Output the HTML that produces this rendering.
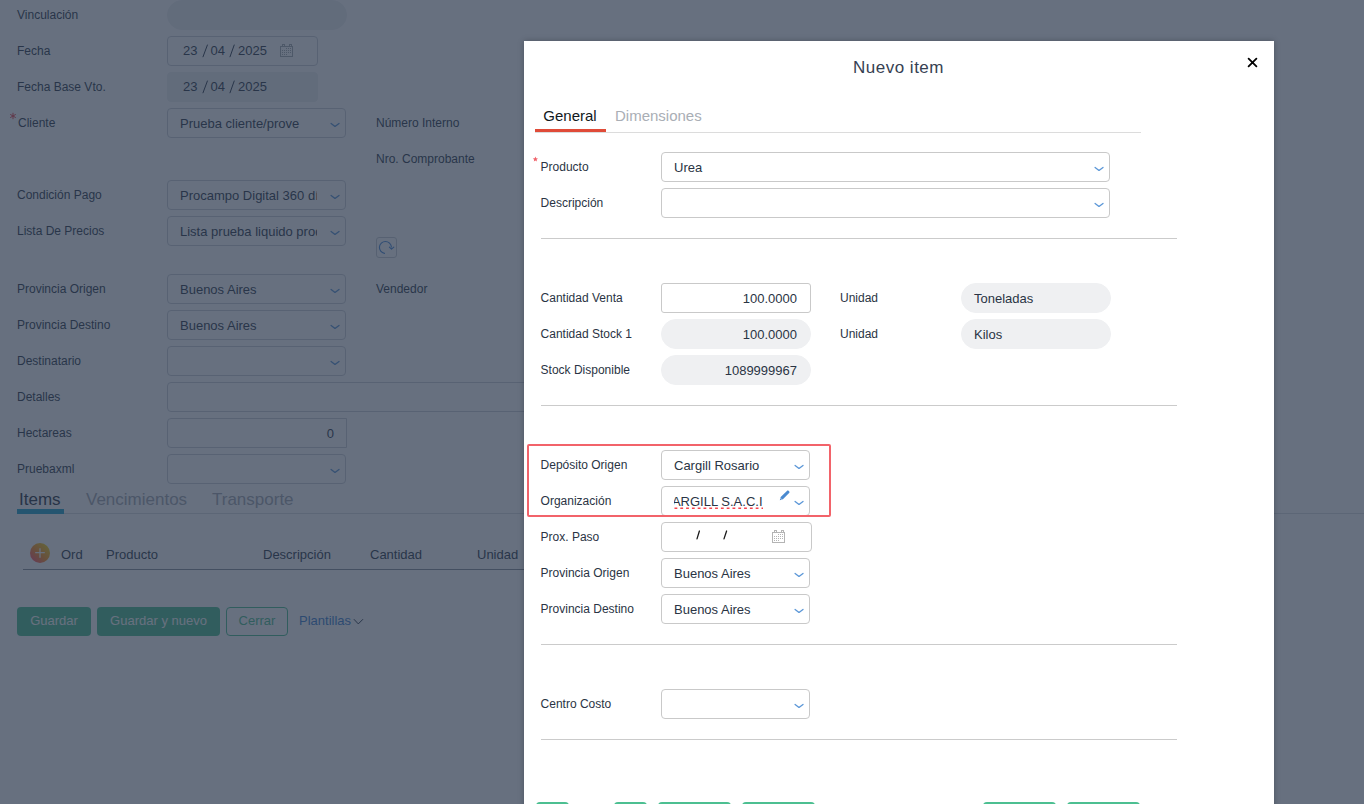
<!DOCTYPE html>
<html><head><meta charset="utf-8"><style>
*{box-sizing:border-box;margin:0;padding:0}
html,body{width:1364px;height:804px;overflow:hidden;background:#fff;font-family:"Liberation Sans",sans-serif;color:#2f3b4c}
.a{position:absolute}
svg.a{overflow:visible}
.lb{position:absolute;font-size:12px;line-height:12px;white-space:nowrap;color:#2f3b4c}
.val{position:absolute;font-size:13px;line-height:13px;white-space:nowrap;color:#2f3b4c}
.in{position:absolute;height:30px;border:1px solid #cdd1d6;border-radius:4px;background:#fff;font-size:13px;line-height:30px;padding-left:12px;white-space:nowrap;overflow:hidden;color:#2f3b4c}
.clip{display:inline-block;overflow:hidden;vertical-align:top}
.dis{background:#eef0f2;border-color:#eef0f2}
.pill{border-radius:15px}
.star{position:absolute;color:#e8434d;font-size:14px;line-height:14px}
.tab{position:absolute;top:490.7px;font-size:17px;line-height:17px;white-space:nowrap}
.th{position:absolute;top:548px;font-size:13px;line-height:13px;white-space:nowrap;color:#2f3b4c}
#ov{position:absolute;left:0;top:0;width:1364px;height:804px;background:rgba(39,51,72,0.7)}
#modal{position:absolute;left:524px;top:41px;width:750px;height:800px;background:#fff;box-shadow:0 0 6px rgba(0,0,0,0.25)}
#modal .lb,#modal .in{color:#2a3444}
#modal .in{border-color:#c9c9c9}
#modal .dis{border-color:#eff0f2;background:#eff0f2}
.sep{position:absolute;height:1px;background:#cbcbcb}
.btn{position:absolute;height:29px;border-radius:4px;background:#4cbf91;color:#fff;font-size:13px;line-height:27px;text-align:center;white-space:nowrap}
</style></head><body>
<div id="bg">
<div class="lb" style="left:17px;top:9px">Vinculación</div>
<div class="in dis pill" style="left:167px;top:0px;width:180px"></div>
<div class="lb" style="left:17px;top:45px">Fecha</div>
<div class="in" style="left:167px;top:36px;width:151px"></div>
<div class="lb" style="left:17px;top:81px">Fecha Base Vto.</div>
<div class="in dis" style="left:167px;top:72px;width:151px"></div>
<div class="val" style="left:183px;top:44px">23</div>
<div class="val" style="left:210.5px;top:44px">04</div>
<div class="val" style="left:238px;top:44px">2025</div>
<svg class="a" style="left:200.9px;top:42.6px" width="8.400000000000006" height="15.799999999999997"><line x1="6.400000000000006" y1="2.0" x2="2.0" y2="13.799999999999997" stroke="#2f3b4c" stroke-width="1.0" stroke-linecap="round"/></svg>
<svg class="a" style="left:228.2px;top:42.6px" width="8.200000000000017" height="15.799999999999997"><line x1="6.200000000000017" y1="2.0" x2="2.0" y2="13.799999999999997" stroke="#2f3b4c" stroke-width="1.0" stroke-linecap="round"/></svg>
<div class="val" style="left:183px;top:80px">23</div>
<div class="val" style="left:210.5px;top:80px">04</div>
<div class="val" style="left:238px;top:80px">2025</div>
<svg class="a" style="left:200.9px;top:78.6px" width="8.400000000000006" height="15.800000000000011"><line x1="6.400000000000006" y1="2.0" x2="2.0" y2="13.800000000000011" stroke="#2f3b4c" stroke-width="1.0" stroke-linecap="round"/></svg>
<svg class="a" style="left:228.2px;top:78.6px" width="8.200000000000017" height="15.800000000000011"><line x1="6.200000000000017" y1="2.0" x2="2.0" y2="13.800000000000011" stroke="#2f3b4c" stroke-width="1.0" stroke-linecap="round"/></svg>
<svg class="a" style="left:278px;top:42px" width="18" height="18" viewBox="0 0 18 18"><g fill="none" stroke="#a9adb3" stroke-width="1"><rect x="2.5" y="4.5" width="12" height="10"/><rect x="4.5" y="2.5" width="2" height="2"/><rect x="11.5" y="2.5" width="2" height="2"/></g><g fill="#a9adb3"><rect x="8" y="6" width="1" height="1"/><rect x="10" y="6" width="1" height="1"/><rect x="12" y="6" width="1" height="1"/><rect x="4" y="8" width="1" height="1"/><rect x="6" y="8" width="1" height="1"/><rect x="8" y="8" width="1" height="1"/><rect x="10" y="8" width="1" height="1"/><rect x="12" y="8" width="1" height="1"/><rect x="4" y="10" width="1" height="1"/><rect x="6" y="10" width="1" height="1"/><rect x="8" y="10" width="1" height="1"/><rect x="10" y="10" width="1" height="1"/><rect x="12" y="10" width="1" height="1"/><rect x="4" y="12" width="1" height="1"/><rect x="6" y="12" width="1" height="1"/><rect x="8" y="12" width="1" height="1"/></g></svg>
<svg class="a" style="left:0;top:0" width="1" height="1"><path d="M13.00 113.20L13.00 118.80M15.42 114.60L10.58 117.40M15.42 117.40L10.58 114.60" stroke="#e8434d" stroke-width="1.0" stroke-linecap="round"/></svg>
<div class="lb" style="left:18px;top:117px">Cliente</div>
<div class="in " style="left:167px;top:108px;width:179px">Prueba cliente/prove</div>
<svg class="a" style="left:328.6px;top:121px" width="12" height="8" viewBox="0 0 12 8"><path d="M2.1 2.4L6 5.4L10 2.4" fill="none" stroke="#5a96d7" stroke-width="1.3" stroke-linecap="round" stroke-linejoin="round"/></svg>
<div class="lb" style="left:376px;top:117px">Número Interno</div>
<div class="lb" style="left:376px;top:153px">Nro. Comprobante</div>
<div class="lb" style="left:17px;top:189px">Condición Pago</div>
<div class="in " style="left:167px;top:180px;width:179px"><span class="clip" style="width:137px">Procampo Digital 360 días</span></div>
<svg class="a" style="left:328.6px;top:193px" width="12" height="8" viewBox="0 0 12 8"><path d="M2.1 2.4L6 5.4L10 2.4" fill="none" stroke="#5a96d7" stroke-width="1.3" stroke-linecap="round" stroke-linejoin="round"/></svg>
<div class="lb" style="left:17px;top:225px">Lista De Precios</div>
<div class="in " style="left:167px;top:216px;width:179px"><span class="clip" style="width:137px">Lista prueba liquido producto</span></div>
<svg class="a" style="left:328.6px;top:229px" width="12" height="8" viewBox="0 0 12 8"><path d="M2.1 2.4L6 5.4L10 2.4" fill="none" stroke="#5a96d7" stroke-width="1.3" stroke-linecap="round" stroke-linejoin="round"/></svg>
<div class="a" style="left:376px;top:237px;width:21px;height:21px;border:1px solid #c9cdd2;border-radius:3px"></div>
<svg class="a" style="left:376px;top:237px" width="21" height="21" viewBox="0 0 21 21"><path d="M8.5 16.4A6 6 0 1 1 15.4 10" fill="none" stroke="#4a8ad8" stroke-width="1.15" stroke-linecap="round"/><path d="M13.4 10.1L15.5 12.2L17.8 10.1" fill="none" stroke="#4a8ad8" stroke-width="1.15" stroke-linecap="round" stroke-linejoin="round"/></svg>
<div class="lb" style="left:17px;top:283px">Provincia Origen</div>
<div class="in " style="left:167px;top:274px;width:179px">Buenos Aires</div>
<svg class="a" style="left:328.6px;top:287px" width="12" height="8" viewBox="0 0 12 8"><path d="M2.1 2.4L6 5.4L10 2.4" fill="none" stroke="#5a96d7" stroke-width="1.3" stroke-linecap="round" stroke-linejoin="round"/></svg>
<div class="lb" style="left:376px;top:283px">Vendedor</div>
<div class="lb" style="left:17px;top:319px">Provincia Destino</div>
<div class="in " style="left:167px;top:310px;width:179px">Buenos Aires</div>
<svg class="a" style="left:328.6px;top:323px" width="12" height="8" viewBox="0 0 12 8"><path d="M2.1 2.4L6 5.4L10 2.4" fill="none" stroke="#5a96d7" stroke-width="1.3" stroke-linecap="round" stroke-linejoin="round"/></svg>
<div class="lb" style="left:17px;top:355px">Destinatario</div>
<div class="in " style="left:167px;top:346px;width:179px"></div>
<svg class="a" style="left:328.6px;top:359px" width="12" height="8" viewBox="0 0 12 8"><path d="M2.1 2.4L6 5.4L10 2.4" fill="none" stroke="#5a96d7" stroke-width="1.3" stroke-linecap="round" stroke-linejoin="round"/></svg>
<div class="lb" style="left:17px;top:391px">Detalles</div>
<div class="in " style="left:167px;top:382px;width:900px"></div>
<div class="lb" style="left:17px;top:427px">Hectareas</div>
<div class="in " style="left:167px;top:418px;width:180px;text-align:right;padding-right:13px;padding-right:12px;border-radius:4px 0 0 4px">0</div>
<div class="lb" style="left:17px;top:463px">Pruebaxml</div>
<div class="in " style="left:167px;top:454px;width:179px"></div>
<svg class="a" style="left:328.6px;top:467px" width="12" height="8" viewBox="0 0 12 8"><path d="M2.1 2.4L6 5.4L10 2.4" fill="none" stroke="#5a96d7" stroke-width="1.3" stroke-linecap="round" stroke-linejoin="round"/></svg>
<div class="tab" style="left:19px;color:#2a3444">Items</div>
<div class="tab" style="left:86px;color:#a3a9b1">Vencimientos</div>
<div class="tab" style="left:212px;color:#a3a9b1">Transporte</div>
<div class="a" style="left:17px;top:513px;width:1347px;height:1px;background:#d9dce0"></div>
<div class="a" style="left:17px;top:509px;width:47px;height:5px;background:#22a6cc"></div>
<div class="a" style="left:30px;top:543px;width:20px;height:20px;border-radius:10px;background:linear-gradient(45deg,#ff3f80 0%,#ff9320 48%,#f2e41a 100%)"></div>
<svg class="a" style="left:30px;top:543px" width="20" height="20"><path d="M10 5.2V14.8M5.2 9.6H14.8" stroke="#fff" stroke-width="1.3"/></svg>
<div class="th" style="left:61px">Ord</div>
<div class="th" style="left:106px">Producto</div>
<div class="th" style="left:263px">Descripción</div>
<div class="th" style="left:370px">Cantidad</div>
<div class="th" style="left:477px">Unidad</div>
<div class="a" style="left:23px;top:569px;width:1000px;height:1px;background:#8a919c"></div>
<div class="btn" style="left:17px;top:607px;width:74px">Guardar</div>
<div class="btn" style="left:97px;top:607px;width:123px">Guardar y nuevo</div>
<div class="btn" style="left:226px;top:607px;width:62px;background:#fff;border:1px solid #4cbf91;color:#4cbf91;line-height:25px">Cerrar</div>
<div class="a" style="left:299px;top:614px;font-size:13px;line-height:13px;color:#3c7fd0">Plantillas</div>
<svg class="a" style="left:352px;top:617px" width="13" height="9"><path d="M1.9 2.2L6.3 6.9L11 2.2" fill="none" stroke="#2f3b4c" stroke-width="1"/></svg>
</div>
<div id="ov"></div>
<div id="modal">
<div class="a" style="left:329px;top:18px;font-size:17px;line-height:17px;letter-spacing:0.5px;color:#364152">Nuevo item</div>
<svg class="a" style="left:723px;top:16px" width="11" height="11" viewBox="0 0 11 11"><path d="M1.6 1.6L9.4 9.4M9.4 1.6L1.6 9.4" stroke="#000" stroke-width="1.8" stroke-linecap="round"/></svg>
<div class="a" style="left:19.3px;top:67px;font-size:15px;line-height:15px;color:#111820">General</div>
<div class="a" style="left:91px;top:67px;font-size:15px;line-height:15px;color:#a9aeb5">Dimensiones</div>
<div class="a" style="left:11px;top:91px;width:606px;height:1px;background:#dcdcdc"></div>
<div class="a" style="left:11px;top:88px;width:71px;height:3px;background:#e04b38"></div>
<svg class="a" style="left:0;top:0" width="1" height="1"><polygon points="11.40,115.60 12.11,117.32 13.97,117.47 12.56,118.68 12.99,120.48 11.40,119.52 9.81,120.48 10.24,118.68 8.83,117.47 10.69,117.32" fill="#f0626a"/></svg>
<div class="lb" style="left:16.600000000000023px;top:120px">Producto</div>
<div class="in " style="left:137px;top:111px;width:449px">Urea</div>
<svg class="a" style="left:568.6px;top:124px" width="12" height="8" viewBox="0 0 12 8"><path d="M2.1 2.4L6 5.4L10 2.4" fill="none" stroke="#5a96d7" stroke-width="1.3" stroke-linecap="round" stroke-linejoin="round"/></svg>
<div class="lb" style="left:16.600000000000023px;top:156px">Descripción</div>
<div class="in " style="left:137px;top:147px;width:449px"></div>
<svg class="a" style="left:568.6px;top:160px" width="12" height="8" viewBox="0 0 12 8"><path d="M2.1 2.4L6 5.4L10 2.4" fill="none" stroke="#5a96d7" stroke-width="1.3" stroke-linecap="round" stroke-linejoin="round"/></svg>
<div class="sep" style="left:17px;top:197px;width:636px"></div>
<div class="lb" style="left:16.600000000000023px;top:251px">Cantidad Venta</div>
<div class="in " style="left:137px;top:242px;width:150px;text-align:right;padding-right:13px;border-radius:3px">100.0000</div>
<div class="lb" style="left:316px;top:251px">Unidad</div>
<div class="in dis pill" style="left:437px;top:242px;width:150px">Toneladas</div>
<div class="lb" style="left:16.600000000000023px;top:287px">Cantidad Stock 1</div>
<div class="in dis pill" style="left:137px;top:278px;width:150px;text-align:right;padding-right:13px">100.0000</div>
<div class="lb" style="left:316px;top:287px">Unidad</div>
<div class="in dis pill" style="left:437px;top:278px;width:150px">Kilos</div>
<div class="lb" style="left:16.600000000000023px;top:323px">Stock Disponible</div>
<div class="in dis pill" style="left:137px;top:314px;width:150px;text-align:right;padding-right:13px">1089999967</div>
<div class="sep" style="left:17px;top:364px;width:636px"></div>
<div class="lb" style="left:16.600000000000023px;top:418px">Depósito Origen</div>
<div class="in " style="left:137px;top:409px;width:149px">Cargill Rosario</div>
<svg class="a" style="left:268.6px;top:422px" width="12" height="8" viewBox="0 0 12 8"><path d="M2.1 2.4L6 5.4L10 2.4" fill="none" stroke="#5a96d7" stroke-width="1.3" stroke-linecap="round" stroke-linejoin="round"/></svg>
<div class="lb" style="left:16.600000000000023px;top:454px">Organización</div>
<div class="in " style="left:137px;top:445px;width:149px"></div>
<svg class="a" style="left:268.6px;top:458px" width="12" height="8" viewBox="0 0 12 8"><path d="M2.1 2.4L6 5.4L10 2.4" fill="none" stroke="#5a96d7" stroke-width="1.3" stroke-linecap="round" stroke-linejoin="round"/></svg>
<div class="a" style="left:150px;top:449px;width:88.5px;height:22px;overflow:hidden"><div class="val" style="right:0;top:5px;color:#2a3444">CARGILL S.A.C.I</div></div>
<svg class="a" style="left:150px;top:466px" width="89" height="3"><path d="M0.5 1.2H89" stroke="#f4303a" stroke-opacity="0.9" stroke-width="1.5" stroke-dasharray="2.8 3"/></svg>
<svg class="a" style="left:250px;top:445px" width="20" height="18" viewBox="0 0 20 18"><path d="M5.8 14.2L6.7 11.1L12.9 4.9C13.4 4.4 14.2 4.4 14.7 4.9L15.1 5.3C15.6 5.8 15.6 6.6 15.1 7.1L8.9 13.3Z" fill="#4a8ad0"/><path d="M6.2 11.9L8.1 13.8" stroke="#fff" stroke-width="0.6" stroke-opacity="0.8"/></svg>
<div class="a" style="left:3px;top:403px;width:304px;height:73px;border:2px solid #f2636a;border-radius:2px"></div>
<div class="lb" style="left:16.600000000000023px;top:490px">Prox. Paso</div>
<div class="in " style="left:137px;top:481px;width:151px"></div>
<svg class="a" style="left:171.10000000000002px;top:488.29999999999995px" width="6.399999999999977" height="11.900000000000091"><line x1="4.399999999999977" y1="2.0" x2="2.0" y2="9.900000000000091" stroke="#1a1a1a" stroke-width="1.3" stroke-linecap="round"/></svg>
<svg class="a" style="left:197.70000000000005px;top:488.29999999999995px" width="6.599999999999909" height="11.900000000000091"><line x1="4.599999999999909" y1="2.0" x2="2.0" y2="9.900000000000091" stroke="#1a1a1a" stroke-width="1.3" stroke-linecap="round"/></svg>
<svg class="a" style="left:246px;top:487px" width="18" height="18" viewBox="0 0 18 18"><g fill="none" stroke="#b4b4b4" stroke-width="1"><rect x="2.5" y="4.5" width="12" height="10"/><rect x="4.5" y="2.5" width="2" height="2"/><rect x="11.5" y="2.5" width="2" height="2"/></g><g fill="#b4b4b4"><rect x="8" y="6" width="1" height="1"/><rect x="10" y="6" width="1" height="1"/><rect x="12" y="6" width="1" height="1"/><rect x="4" y="8" width="1" height="1"/><rect x="6" y="8" width="1" height="1"/><rect x="8" y="8" width="1" height="1"/><rect x="10" y="8" width="1" height="1"/><rect x="12" y="8" width="1" height="1"/><rect x="4" y="10" width="1" height="1"/><rect x="6" y="10" width="1" height="1"/><rect x="8" y="10" width="1" height="1"/><rect x="10" y="10" width="1" height="1"/><rect x="12" y="10" width="1" height="1"/><rect x="4" y="12" width="1" height="1"/><rect x="6" y="12" width="1" height="1"/><rect x="8" y="12" width="1" height="1"/></g></svg>
<div class="lb" style="left:16.600000000000023px;top:526px">Provincia Origen</div>
<div class="in " style="left:137px;top:517px;width:149px">Buenos Aires</div>
<svg class="a" style="left:268.6px;top:530px" width="12" height="8" viewBox="0 0 12 8"><path d="M2.1 2.4L6 5.4L10 2.4" fill="none" stroke="#5a96d7" stroke-width="1.3" stroke-linecap="round" stroke-linejoin="round"/></svg>
<div class="lb" style="left:16.600000000000023px;top:562px">Provincia Destino</div>
<div class="in " style="left:137px;top:553px;width:149px">Buenos Aires</div>
<svg class="a" style="left:268.6px;top:566px" width="12" height="8" viewBox="0 0 12 8"><path d="M2.1 2.4L6 5.4L10 2.4" fill="none" stroke="#5a96d7" stroke-width="1.3" stroke-linecap="round" stroke-linejoin="round"/></svg>
<div class="sep" style="left:17px;top:603px;width:636px"></div>
<div class="lb" style="left:16.600000000000023px;top:657px">Centro Costo</div>
<div class="in " style="left:137px;top:648px;width:149px"></div>
<svg class="a" style="left:268.6px;top:661px" width="12" height="8" viewBox="0 0 12 8"><path d="M2.1 2.4L6 5.4L10 2.4" fill="none" stroke="#5a96d7" stroke-width="1.3" stroke-linecap="round" stroke-linejoin="round"/></svg>
<div class="sep" style="left:17px;top:698px;width:636px"></div>
<div class="btn" style="left:11.700000000000045px;top:761px;width:33.59999999999991px"></div>
<div class="btn" style="left:89.70000000000005px;top:761px;width:33.5px"></div>
<div class="btn" style="left:133.60000000000002px;top:761px;width:73.69999999999993px"></div>
<div class="btn" style="left:217.60000000000002px;top:761px;width:73.69999999999993px"></div>
<div class="btn" style="left:458.70000000000005px;top:761px;width:73.59999999999991px"></div>
<div class="btn" style="left:542.5999999999999px;top:761px;width:73.80000000000018px"></div>
</div>
</body></html>
